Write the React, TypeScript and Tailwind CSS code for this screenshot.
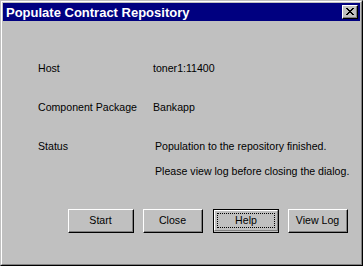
import React from 'react'

function Btn({ label, focused }: { label: string; focused?: boolean }) {
  if (focused) {
    return (
      <div className="border border-black">
        <div className="border-t border-l border-t-white border-l-white border-r border-b border-r-[#808080] border-b-[#808080] h-[21px] w-[64px] flex items-center justify-center p-[2px]">
          <div className="border border-dotted border-black w-full h-full flex items-center justify-center">
            {label}
          </div>
        </div>
      </div>
    )
  }
  return (
    <div className="border-t border-l border-t-white border-l-white border-r border-b border-r-black border-b-black">
      <div className="border-r border-b border-r-[#808080] border-b-[#808080] h-[22px] flex items-center justify-center">
        {label}
      </div>
    </div>
  )
}

export default function App() {
  return (
    <div
      className="w-[363px] h-[266px] bg-[#c0c0c0] border-t border-l border-t-[#c0c0c0] border-l-[#c0c0c0] border-r border-b border-r-black border-b-black text-[10.6px] text-black"
      style={{ fontFamily: '"Liberation Sans", Arial, sans-serif' }}
    >
      <div className="h-full border-t border-l border-t-white border-l-white border-r border-b border-r-[#808080] border-b-[#808080] p-px flex flex-col">
        {/* title bar */}
        <div className="h-[18px] bg-[#000080] flex items-center justify-between pl-[3px] pr-[2px]">
          <span className="text-white font-bold text-[13px] leading-none">Populate Contract Repository</span>
          <div className="w-[16px] h-[14px] border-t border-l border-t-white border-l-white border-r border-b border-r-black border-b-black bg-[#c0c0c0]">
            <div className="w-full h-full border-r border-b border-r-[#808080] border-b-[#808080] flex items-center justify-center">
              <svg width="8" height="7" viewBox="0 0 8 7" shapeRendering="crispEdges">
                <path d="M0 0h2v1h-2zM6 0h2v1h-2zM1 1h2v1h-2zM5 1h2v1h-2zM2 2h4v1h-4zM3 3h2v1h-2zM2 4h4v1h-4zM1 5h2v1h-2zM5 5h2v1h-2zM0 6h2v1h-2zM6 6h2v1h-2z" fill="#000" />
              </svg>
            </div>
          </div>
        </div>

        {/* body */}
        <div className="flex-1 flex flex-col pl-[35px] pt-[41px]">
          <div className="grid grid-cols-[115px_1fr] gap-y-[26px] leading-[13px]">
            <span>Host</span>
            <span>toner1:11400</span>
            <span>Component Package</span>
            <span>Bankapp</span>
            <span>Status</span>
            <div className="flex flex-col gap-[12px] ml-[2px]">
              <span>Population to the repository finished.</span>
              <span>Please view log before closing the dialog.</span>
            </div>
          </div>
        </div>

        <div className="flex gap-[9px] pl-[65px] pb-[30px]">
          <div className="w-[66px]"><Btn label="Start" /></div>
          <div className="w-[60px] mr-[1px]"><Btn label="Close" /></div>
          <Btn label="Help" focused />
          <div className="w-[60px]"><Btn label="View Log" /></div>
        </div>
      </div>
    </div>
  )
}
